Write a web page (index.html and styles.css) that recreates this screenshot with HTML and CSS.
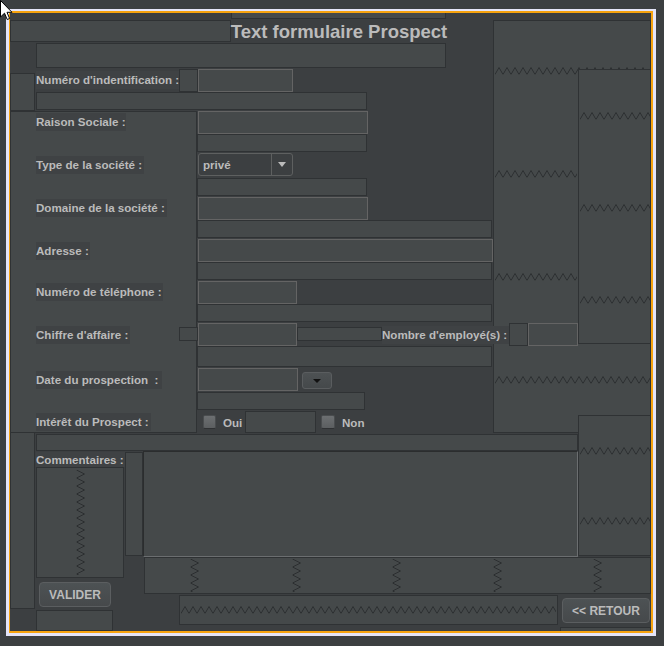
FILE: index.html
```html
<!DOCTYPE html>
<html lang="fr">
<head>
<meta charset="utf-8">
<title>Text formulaire Prospect</title>
<link rel="stylesheet" href="styles.css">
</head>
<body>
<svg class="n defs" width="0" height="0">
  <defs>
    <pattern id="ph" width="8" height="8" patternUnits="userSpaceOnUse">
      <polyline points="0,7.5 4,0.5 8,7.5" fill="none" stroke="#2b2e30" stroke-width="1"/>
    </pattern>
    <pattern id="pv" width="9" height="8" patternUnits="userSpaceOnUse">
      <polyline points="0.5,0 8.5,4 0.5,8" fill="none" stroke="#2b2e30" stroke-width="1"/>
    </pattern>
  </defs>
</svg>

<!-- right-hand springs -->
<div class="n box r1"></div>
<svg class="n zz zA"><rect width="100%" height="100%" fill="url(#ph)"/></svg>
<svg class="n zz zB"><rect width="100%" height="100%" fill="url(#ph)"/></svg>
<svg class="n zz zC"><rect width="100%" height="100%" fill="url(#ph)"/></svg>
<svg class="n zz zD"><rect width="100%" height="100%" fill="url(#ph)"/></svg>
<div class="n box r2"></div>
<svg class="n zz zE"><rect width="100%" height="100%" fill="url(#ph)"/></svg>
<svg class="n zz zF"><rect width="100%" height="100%" fill="url(#ph)"/></svg>
<svg class="n zz zG"><rect width="100%" height="100%" fill="url(#ph)"/></svg>
<div class="n box r3"></div>
<svg class="n zz zH"><rect width="100%" height="100%" fill="url(#ph)"/></svg>
<svg class="n zz zI"><rect width="100%" height="100%" fill="url(#ph)"/></svg>

<!-- header -->
<div class="n box b1"></div>
<div class="n box b2"></div>
<h1 class="n title">Text formulaire Prospect</h1>
<div class="n box b4"></div>
<div class="n box b5"></div>

<label class="n lbl l1">Numéro d'indentification :</label>
<div class="n box b7"></div>
<div class="n field tf1"></div>
<div class="n box b9"></div>

<div class="n box panel"></div>

<label class="n lbl l2">Raison Sociale :</label>
<div class="n field tf2"></div>
<div class="n box b12"></div>

<label class="n lbl l3">Type de la société :</label>
<div class="n combo cb1"><span class="combo-text">privé</span><span class="combo-arrow"><i class="tri"></i></span></div>
<div class="n box b15"></div>

<label class="n lbl l4">Domaine de la société :</label>
<div class="n field tf3"></div>
<div class="n box b18"></div>

<label class="n lbl l5">Adresse :</label>
<div class="n field tf4"></div>
<div class="n box b21"></div>

<label class="n lbl l6">Numéro de téléphone :</label>
<div class="n field tf5"></div>
<div class="n box b24"></div>

<label class="n lbl l7">Chiffre d'affaire :</label>
<div class="n box b26"></div>
<div class="n field tf6"></div>
<div class="n box b28"></div>
<label class="n lbl lnb">Nombre d'employé(s) :</label>
<div class="n box b30"></div>
<div class="n field tf7"></div>
<div class="n box b32"></div>

<label class="n lbl l8">Date du prospection&nbsp; :</label>
<div class="n field tf8"></div>
<div class="n datebtn"><i class="tri dark"></i></div>
<div class="n box b36"></div>

<label class="n lbl l9">Intérêt du Prospect :</label>
<span class="n check ck1"></span>
<span class="n txt t-oui">Oui</span>
<div class="n box b39"></div>
<span class="n check ck2"></span>
<span class="n txt t-non">Non</span>

<div class="n box b52"></div>
<div class="n box b41"></div>
<label class="n lbl lcom">Commentaires :</label>
<div class="n box b43"></div>
<svg class="n zz zv0"><rect width="100%" height="100%" fill="url(#pv)"/></svg>
<div class="n box b44"></div>
<div class="n textarea ta"></div>

<div class="n box b46"></div>
<svg class="n zz zv1"><rect width="100%" height="100%" fill="url(#pv)"/></svg>
<svg class="n zz zv2"><rect width="100%" height="100%" fill="url(#pv)"/></svg>
<svg class="n zz zv3"><rect width="100%" height="100%" fill="url(#pv)"/></svg>
<svg class="n zz zv4"><rect width="100%" height="100%" fill="url(#pv)"/></svg>
<svg class="n zz zv5"><rect width="100%" height="100%" fill="url(#pv)"/></svg>

<button class="n btn valider">VALIDER</button>
<div class="n box b48"></div>
<div class="n box b49"></div>
<svg class="n zz zJ"><rect width="100%" height="100%" fill="url(#ph)"/></svg>
<button class="n btn retour">&lt;&lt; RETOUR</button>
<div class="n box b51"></div>

<!-- design frame -->
<div class="n frame-outer"></div>
<div class="n frame-inner"></div>

<svg class="cursor" width="13" height="21" viewBox="0 0 13 21">
  <path d="M0.5 0.5 L0.5 17 L4.5 13.2 L7.2 19.5 L9.6 18.5 L7 12.3 L12 12.3 Z" fill="#ffffff" stroke="#000000" stroke-width="1"/>
</svg>
</body>
</html>
```

FILE: styles.css
```css
html, body {
  margin: 0;
  padding: 0;
}

body {
  width: 664px;
  height: 646px;
  overflow: hidden;
  background: #3c3f41;
  display: grid;
  grid-template-columns: repeat(664, 1px);
  grid-template-rows: repeat(646, 1px);
  font-family: "Liberation Sans", Arial, sans-serif;
  position: relative;
}

/* every design-canvas component is placed on the 1px grid */
.n {
  grid-column: var(--c) / span var(--w);
  grid-row: var(--r) / span var(--h);
  box-sizing: border-box;
  min-width: 0;
  min-height: 0;
  margin: 0;
}

.defs { --c: 1; --r: 1; --w: 1; --h: 1; width: 0; height: 0; }

.box {
  background: #45494a;
  border: 1px solid #2f3234;
}

.field {
  background: #45494a;
  border: 1px solid #646464;
}

.zz {
  width: 100%;
  height: 100%;
  display: block;
}

.lbl {
  background: #3f4244;
  color: #bbbbbb;
  font-weight: bold;
  font-size: 11.6px;
  line-height: 1;
  display: flex;
  align-items: center;
  white-space: nowrap;
  overflow: visible;
}

.txt {
  color: #bbbbbb;
  font-weight: bold;
  font-size: 11.6px;
  display: flex;
  align-items: center;
  white-space: nowrap;
}

.title {
  color: #bbbbbb;
  font-size: 18.5px;
  font-weight: bold;
  display: flex;
  align-items: center;
  justify-content: center;
  white-space: nowrap;
}

/* combo */
.combo {
  display: flex;
  background: #3c3f41;
  border: 1px solid #5e6060;
  border-radius: 3px;
}
.combo-text {
  flex: 1;
  color: #bbbbbb;
  font-weight: bold;
  font-size: 11.6px;
  display: flex;
  align-items: center;
  padding-left: 4px;
}
.combo-arrow {
  width: 20px;
  border-left: 1px solid #5e6060;
  display: flex;
  align-items: center;
  justify-content: center;
}
.tri {
  display: block;
  width: 0;
  height: 0;
  border-left: 4px solid transparent;
  border-right: 4px solid transparent;
  border-top: 5px solid #bbbbbb;
}
.tri.dark {
  border-top-color: #111111;
  border-top-width: 4px;
}

.datebtn {
  display: flex;
  align-items: center;
  justify-content: center;
  background: linear-gradient(#4d5153, #45494b);
  border: 1px solid #5a5d5f;
  border-radius: 3px;
}

.check {
  background: linear-gradient(#6c6f71, #5c5f61);
  border: 1px solid #4a4d4f;
  border-bottom-color: #2f3133;
  border-radius: 2px;
}

.textarea {
  background: #45494a;
  border: 1px solid;
  border-color: #2b2d2e #6b6e70 #6b6e70 #2b2d2e;
}

.btn {
  padding: 0;
  font-family: "Liberation Sans", Arial, sans-serif;
  font-weight: bold;
  font-size: 12px;
  color: #bbbbbb;
  background: linear-gradient(#4d5254, #46494b);
  border: 1px solid #5b5e60;
  border-radius: 4px;
}

.frame-outer {
  border-style: solid;
  border-color: #e4e4f8;
  border-width: 2px 3px 3px 3px;
}
.frame-inner {
  border-style: solid;
  border-color: #f7a30f;
  border-width: 2px 2px 2px 1px;
}

.cursor {
  position: absolute;
  left: 0;
  top: 0;
}

/* ---- placements: --c = x+1, --r = y+1 ---- */
.frame-outer { --c: 7;  --r: 10; --w: 650; --h: 627; }
.frame-inner { --c: 10; --r: 12; --w: 644; --h: 622; }

.r1 { --c: 494; --r: 21;  --w: 158; --h: 413; }
.zA { --c: 496; --r: 68;  --w: 155; --h: 8; }
.zB { --c: 496; --r: 171; --w: 82;  --h: 8; }
.zC { --c: 496; --r: 274; --w: 82;  --h: 8; }
.zD { --c: 496; --r: 377; --w: 155; --h: 8; }
.r2 { --c: 579; --r: 70;  --w: 73;  --h: 275; }
.zE { --c: 581; --r: 113; --w: 70;  --h: 8; }
.zF { --c: 581; --r: 205; --w: 70;  --h: 8; }
.zG { --c: 581; --r: 297; --w: 70;  --h: 8; }
.r3 { --c: 579; --r: 416; --w: 73;  --h: 141; }
.zH { --c: 581; --r: 448; --w: 70;  --h: 8; }
.zI { --c: 581; --r: 518; --w: 70;  --h: 8; }

.b1 { --c: 11;  --r: 21; --w: 221; --h: 22; }
.b2 { --c: 232; --r: 13; --w: 215; --h: 7; }
.title { --c: 231; --r: 22; --w: 218; --h: 21; }
.b4 { --c: 37;  --r: 44; --w: 410; --h: 25; }
.b5 { --c: 11;  --r: 74; --w: 25;  --h: 38; }

.l1  { --c: 37;  --r: 72; --w: 143; --h: 18; }
.b7  { --c: 180; --r: 70; --w: 19;  --h: 23; }
.tf1 { --c: 199; --r: 70; --w: 95;  --h: 23; }
.b9  { --c: 37;  --r: 93; --w: 331; --h: 18; }

.panel { --c: 11; --r: 112; --w: 187; --h: 322; }

.l2  { --c: 37;  --r: 114; --w: 90;  --h: 18; }
.tf2 { --c: 199; --r: 112; --w: 170; --h: 23; }
.b12 { --c: 198; --r: 135; --w: 170; --h: 18; }

.l3  { --c: 37;  --r: 157; --w: 108; --h: 18; }
.cb1 { --c: 199; --r: 154; --w: 95;  --h: 23; }
.b15 { --c: 198; --r: 179; --w: 170; --h: 18; }

.l4  { --c: 37;  --r: 200; --w: 131; --h: 18; }
.tf3 { --c: 199; --r: 198; --w: 170; --h: 23; }
.b18 { --c: 198; --r: 221; --w: 295; --h: 18; }

.l5  { --c: 37;  --r: 243; --w: 54;  --h: 18; }
.tf4 { --c: 199; --r: 240; --w: 295; --h: 23; }
.b21 { --c: 198; --r: 263; --w: 295; --h: 18; }

.l6  { --c: 37;  --r: 284; --w: 127; --h: 18; }
.tf5 { --c: 199; --r: 282; --w: 99;  --h: 23; }
.b24 { --c: 198; --r: 305; --w: 295; --h: 18; }

.l7  { --c: 37;  --r: 327; --w: 94;  --h: 18; }
.b26 { --c: 180; --r: 328; --w: 19;  --h: 14; }
.tf6 { --c: 199; --r: 324; --w: 99;  --h: 23; }
.b28 { --c: 298; --r: 328; --w: 85;  --h: 14; }
.lnb { --c: 383; --r: 327; --w: 127; --h: 18; }
.b30 { --c: 510; --r: 324; --w: 19;  --h: 23; }
.tf7 { --c: 529; --r: 324; --w: 50;  --h: 23; }
.b32 { --c: 198; --r: 347; --w: 295; --h: 21; }

.l8  { --c: 37;  --r: 372; --w: 126; --h: 18; }
.tf8 { --c: 199; --r: 369; --w: 100; --h: 23; }
.datebtn { --c: 303; --r: 373; --w: 30; --h: 17; }
.b36 { --c: 198; --r: 393; --w: 168; --h: 18; }

.l9    { --c: 37;  --r: 414; --w: 115; --h: 18; }
.ck1   { --c: 204; --r: 416; --w: 13;  --h: 14; }
.t-oui { --c: 224; --r: 414; --w: 22;  --h: 18; }
.b39   { --c: 246; --r: 412; --w: 71;  --h: 22; }
.ck2   { --c: 322; --r: 416; --w: 14;  --h: 14; }
.t-non { --c: 343; --r: 414; --w: 26;  --h: 18; }

.b52  { --c: 11;  --r: 433; --w: 25;  --h: 177; }
.b41  { --c: 37;  --r: 435; --w: 542; --h: 17; }
.lcom { --c: 37;  --r: 453; --w: 89;  --h: 15; }
.b43  { --c: 37;  --r: 468; --w: 88;  --h: 111; }
.zv0  { --c: 77;  --r: 471; --w: 9;   --h: 105; }
.b44  { --c: 126; --r: 453; --w: 18;  --h: 104; }
.ta   { --c: 144; --r: 452; --w: 435; --h: 106; }

.b46 { --c: 145; --r: 558; --w: 507; --h: 37; }
.zv1 { --c: 191; --r: 560; --w: 9; --h: 33; }
.zv2 { --c: 293; --r: 560; --w: 9; --h: 33; }
.zv3 { --c: 393; --r: 560; --w: 9; --h: 33; }
.zv4 { --c: 494; --r: 560; --w: 9; --h: 33; }
.zv5 { --c: 594; --r: 560; --w: 9; --h: 33; }

.valider { --c: 40;  --r: 583; --w: 72;  --h: 25; }
.b48     { --c: 37;  --r: 611; --w: 77;  --h: 21; }
.b49     { --c: 180; --r: 596; --w: 379; --h: 30; }
.zJ      { --c: 182; --r: 607; --w: 375; --h: 8; }
.retour  { --c: 563; --r: 599; --w: 88;  --h: 25; }
.b51     { --c: 561; --r: 628; --w: 91;  --h: 5; }
```
